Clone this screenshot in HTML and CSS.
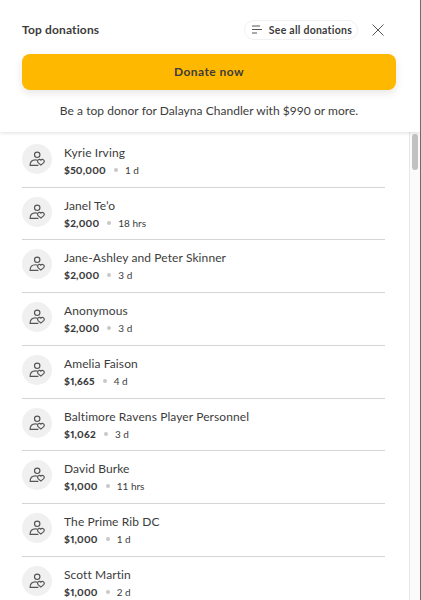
FILE: index.html
```html
<!DOCTYPE html>
<html lang="en">
<head>
  <meta charset="UTF-8" />
  <meta name="viewport" content="width=device-width, initial-scale=1" />
  <title>Top donations</title>
  <link rel="stylesheet" href="styles.css">
</head>
<body>
  <svg class="sprite" aria-hidden="true">
    <symbol id="donor" viewBox="0 0 16 16">
      <circle cx="8.2" cy="3.8" r="2.7" />
      <path d="M9.4 14.4H1.1c0-3.4 2.1-5.6 5.4-5.6 .8 0 1.4.1 2 .4" />
      <path d="M11.9 14.1 9.1 11.6C7.5 9.4 10.3 7.2 11.9 9.2c1.6-2 4.4.2 2.8 2.4z" />
    </symbol>
  </svg>

  <div class="modal">
    <header class="modal-header">
      <div class="title-bar">
        <h1>Top donations</h1>
        <button class="see-all" type="button">
          <svg width="10" height="9" viewBox="0 0 10 9"><path d="M0 1h8M0 4.5h10M0 8h5" /></svg>
          <span>See all donations</span>
        </button>
        <button class="close" type="button" aria-label="Close">
          <svg width="12" height="12" viewBox="0 0 12 12"><path d="M.5.5l11 11M11.5.5l-11 11" /></svg>
        </button>
      </div>
      <button class="donate" type="button"><span>Donate now</span></button>
      <p><span>Be a top donor for Dalayna Chandler with $990 or more.</span></p>
    </header>

    <div class="modal-body">
      <ul class="donations">
        <li>
          <div class="avatar"><svg><use href="#donor" /></svg></div>
          <div class="info"><div class="name">Kyrie Irving</div><div class="meta"><b>$50,000</b><i></i><span>1 d</span></div></div>
        </li>
        <li>
          <div class="avatar"><svg><use href="#donor" /></svg></div>
          <div class="info"><div class="name">Janel Te’o</div><div class="meta"><b>$2,000</b><i></i><span>18 hrs</span></div></div>
        </li>
        <li>
          <div class="avatar"><svg><use href="#donor" /></svg></div>
          <div class="info"><div class="name">Jane-Ashley and Peter Skinner</div><div class="meta"><b>$2,000</b><i></i><span>3 d</span></div></div>
        </li>
        <li>
          <div class="avatar"><svg><use href="#donor" /></svg></div>
          <div class="info"><div class="name">Anonymous</div><div class="meta"><b>$2,000</b><i></i><span>3 d</span></div></div>
        </li>
        <li>
          <div class="avatar"><svg><use href="#donor" /></svg></div>
          <div class="info"><div class="name">Amelia Faison</div><div class="meta"><b>$1,665</b><i></i><span>4 d</span></div></div>
        </li>
        <li>
          <div class="avatar"><svg><use href="#donor" /></svg></div>
          <div class="info"><div class="name">Baltimore Ravens Player Personnel</div><div class="meta"><b>$1,062</b><i></i><span>3 d</span></div></div>
        </li>
        <li>
          <div class="avatar"><svg><use href="#donor" /></svg></div>
          <div class="info"><div class="name">David Burke</div><div class="meta"><b>$1,000</b><i></i><span>11 hrs</span></div></div>
        </li>
        <li>
          <div class="avatar"><svg><use href="#donor" /></svg></div>
          <div class="info"><div class="name">The Prime Rib DC</div><div class="meta"><b>$1,000</b><i></i><span>1 d</span></div></div>
        </li>
        <li>
          <div class="avatar"><svg><use href="#donor" /></svg></div>
          <div class="info"><div class="name">Scott Martin</div><div class="meta"><b>$1,000</b><i></i><span>2 d</span></div></div>
        </li>
      </ul>
      <div class="scrollbar"><div class="thumb"></div></div>
    </div>
  </div>
</body>
</html>
```
FILE: styles.css
```css
* {
  box-sizing: border-box;
}
body {
  margin: 0;
  font-family: Lato, "Open Sans", sans-serif;
  font-variant-ligatures: none;
  color: #3c3c3c;
  background-color: #6d6d6d;
}
button {
  font: inherit;
  color: inherit;
  padding: 0;
  border: none;
  background: none;
}
svg {
  display: block;
  fill: none;
  stroke: #555;
}
.sprite {
  display: none;
}

/* Modal */
.modal {
  display: flex;
  flex-direction: column;
  width: 420px;
  height: 600px;
  overflow: hidden;
  background-color: #fff;
}
.modal-header {
  flex: none;
  height: 132px;
  padding: 19px 24px 0 22px;
  box-shadow: 0 1px 4px rgba(0, 0, 0, 0.13);
  z-index: 1;
}
.title-bar {
  display: flex;
  align-items: center;
  height: 21px;
}
.title-bar h1 {
  margin: 0 auto 0 0;
  font-size: 12px;
  line-height: 20px;
  font-weight: 700;
  letter-spacing: 0.15px;
}
.see-all {
  display: flex;
  align-items: center;
  gap: 7px;
  height: 20px;
  padding: 0 5px 0 7px;
  border: 1px solid #f1f1f1;
  border-radius: 10px;
  font-size: 10.5px;
  font-weight: 700;
  letter-spacing: 0.25px;
}
.close {
  margin: 0 12px 0 14px;
}

/* Donate button */
.donate {
  display: block;
  width: 100%;
  height: 36px;
  margin-top: 14px;
  padding-bottom: 2px;
  border-radius: 8px;
  background-color: #ffb800;
  box-shadow: 0 3px 8px rgba(0, 0, 0, 0.1);
  font-size: 12px;
  font-weight: 700;
  letter-spacing: 0.45px;
}
.modal-header p {
  margin: 12px 0 0;
  text-align: center;
  font-size: 12px;
  line-height: 18px;
  letter-spacing: 0.04px;
}

/* Donations list */
.modal-body {
  display: flex;
  flex: 1;
  min-height: 0;
}
.donations {
  flex: 1;
  margin: 0;
  padding: 2.9px 24px 0 22px;
  list-style: none;
}
.donations li {
  display: flex;
  height: 52.75px;
  padding-top: 9px;
  border-bottom: 1px solid #d4d4d4;
}
.avatar {
  width: 30px;
  height: 30px;
  padding: 7px;
  border-radius: 50%;
  background-color: #f0f0f0;
}
.avatar svg {
  width: 16px;
  height: 16px;
  stroke-width: 1.15;
}
.info {
  margin-left: 12px;
}
.name {
  font-size: 12px;
  line-height: 18px;
  letter-spacing: 0.1px;
}
.meta {
  display: flex;
  align-items: center;
  font-size: 10px;
  line-height: 16px;
}
.meta b {
  font-weight: 900;
  font-variant-numeric: proportional-nums;
  letter-spacing: 0.2px;
}
.meta i {
  width: 4px;
  height: 4px;
  margin: 0 7px 0 8px;
  border-radius: 50%;
  background-color: #c8c8c8;
}

/* Scrollbar */
.scrollbar {
  width: 11px;
  padding: 2px 1px 0 2px;
  border-left: 1px solid #e8e8e8;
  background-color: #fafafa;
}
.thumb {
  width: 6px;
  height: 36px;
  border-radius: 3px;
  background-color: #c1c1c1;
}
```
